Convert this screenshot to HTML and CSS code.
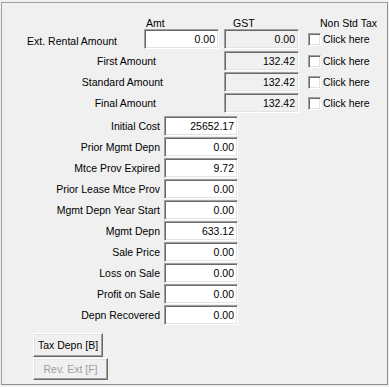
FILE: index.html
```html
<!DOCTYPE html>
<html lang="en">
<head>
    <meta charset="UTF-8">
    <meta name="viewport" content="width=device-width, initial-scale=1.0">
    <title>Disposal</title>
    <link rel="stylesheet" href="styles.css">
</head>
<body>
    <div class="panel">
        <!-- Cabeçalho das colunas -->
        <div class="tax-head">
            <span class="h-amt">Amt</span>
            <span class="h-gst">GST</span>
            <span class="h-non">Non Std Tax</span>
        </div>

        <div class="tax-rows">
            <div class="trow row-ext">
                <label class="tlabel ext">Ext. Rental Amount</label>
                <input class="field amt" type="text" value="0.00">
                <input class="field gst" type="text" value="0.00" readonly>
                <span class="chk"></span>
                <span class="chk-text">Click here</span>
            </div>
            <div class="trow">
                <label class="tlabel wide">First Amount</label>
                <input class="field gst" type="text" value="132.42" readonly>
                <span class="chk"></span>
                <span class="chk-text">Click here</span>
            </div>
            <div class="trow">
                <label class="tlabel wide std">Standard Amount</label>
                <input class="field gst" type="text" value="132.42" readonly>
                <span class="chk"></span>
                <span class="chk-text">Click here</span>
            </div>
            <div class="trow">
                <label class="tlabel wide">Final Amount</label>
                <input class="field gst" type="text" value="132.42" readonly>
                <span class="chk"></span>
                <span class="chk-text">Click here</span>
            </div>
        </div>

        <!-- Valores da baixa -->
        <div class="amounts">
            <div class="arow"><label class="alabel">Initial Cost</label><input class="field val" type="text" value="25652.17"></div>
            <div class="arow"><label class="alabel">Prior Mgmt Depn</label><input class="field val" type="text" value="0.00"></div>
            <div class="arow"><label class="alabel">Mtce Prov Expired</label><input class="field val" type="text" value="9.72"></div>
            <div class="arow"><label class="alabel">Prior Lease Mtce Prov</label><input class="field val" type="text" value="0.00"></div>
            <div class="arow"><label class="alabel">Mgmt Depn Year Start</label><input class="field val" type="text" value="0.00"></div>
            <div class="arow"><label class="alabel">Mgmt Depn</label><input class="field val" type="text" value="633.12"></div>
            <div class="arow"><label class="alabel">Sale Price</label><input class="field val" type="text" value="0.00"></div>
            <div class="arow"><label class="alabel">Loss on Sale</label><input class="field val" type="text" value="0.00"></div>
            <div class="arow"><label class="alabel">Profit on Sale</label><input class="field val" type="text" value="0.00"></div>
            <div class="arow"><label class="alabel">Depn Recovered</label><input class="field val" type="text" value="0.00"></div>
        </div>

        <div class="buttons">
            <button class="btn btn-tax">Tax Depn [B]</button>
            <button class="btn btn-rev" disabled>Rev. Ext [F]</button>
        </div>
    </div>
</body>
</html>
```

FILE: styles.css
```css
/* Estilos gerais */
body {
    margin: 0;
    background-color: #f0f0f0;
    font-family: "Liberation Sans", Arial, sans-serif;
    font-size: 10.5px;
    color: #000;
}

.panel {
    box-sizing: border-box;
    width: 387px;
    height: 383px;
    margin: 2px 0 0 1px;
    border: 1px solid #a0a0a0;
    border-right-color: #8f8f8f;
    border-bottom-color: #8f8f8f;
}

/* Cabeçalho */
.tax-head {
    display: flex;
    height: 12px;
    margin-top: 14px;
    line-height: 13px;
    white-space: nowrap;
}

.h-amt {
    box-sizing: border-box;
    width: 231px;
    padding-left: 144px;
}

.h-gst {
    width: 87px;
}

/* Linhas de imposto */
.tax-rows {
    display: flex;
    flex-direction: column;
    gap: 1px;
}

.trow {
    display: flex;
    align-items: center;
    height: 20px;
    line-height: 20px;
    white-space: nowrap;
}

.row-ext {
    margin-bottom: 1px;
}

.tlabel {
    box-sizing: border-box;
    text-align: right;
}

.tlabel.ext {
    width: 142px;
    padding-right: 27px;
    padding-top: 4px;
}

.tlabel.wide {
    width: 222px;
    padding-right: 68px;
}

.tlabel.std {
    padding-right: 61px;
}

/* Caixas de texto */
.field {
    box-sizing: border-box;
    height: 20px;
    margin: 0;
    padding: 0 3px 0 0;
    font: inherit;
    color: #000;
    text-align: right;
    background-color: #fff;
    border: 1px solid;
    border-color: #a0a0a0 #fff #fff #a0a0a0;
    box-shadow: inset 1px 1px #696969, inset -1px -1px #e3e3e3;
    outline: none;
}

.field.amt {
    width: 75px;
    margin-right: 5px;
}

.field.gst {
    width: 75px;
    background-color: #f0f0f0;
}

.chk {
    box-sizing: border-box;
    width: 13px;
    height: 13px;
    margin-left: 9px;
    background-color: #fff;
    border: 1px solid;
    border-color: #a0a0a0 #fff #fff #a0a0a0;
    box-shadow: inset 1px 1px #696969, inset -1px -1px #e3e3e3;
}

.chk-text {
    margin-left: 2px;
}

/* Valores */
.amounts {
    display: flex;
    flex-direction: column;
    gap: 1px;
    margin-top: 3px;
}

.arow {
    display: flex;
    height: 20px;
    line-height: 20px;
    white-space: nowrap;
}

.alabel {
    box-sizing: border-box;
    width: 162px;
    padding-right: 4px;
    text-align: right;
}

.field.val {
    width: 74px;
}

/* Botões */
.buttons {
    display: flex;
    flex-direction: column;
    align-items: flex-start;
    gap: 1px;
    margin: 8px 0 0 31px;
}

.btn {
    box-sizing: border-box;
    padding: 0;
    font: inherit;
    color: #000;
    background-color: #f0f0f0;
    border: 1px solid;
    border-color: #fff #696969 #696969 #fff;
    box-shadow: inset -1px -1px #a0a0a0, inset 1px 1px #e3e3e3;
}

.btn-tax {
    width: 70px;
    height: 24px;
}

.btn-rev {
    width: 75px;
    height: 22px;
    color: #a0a0a0;
}
```
